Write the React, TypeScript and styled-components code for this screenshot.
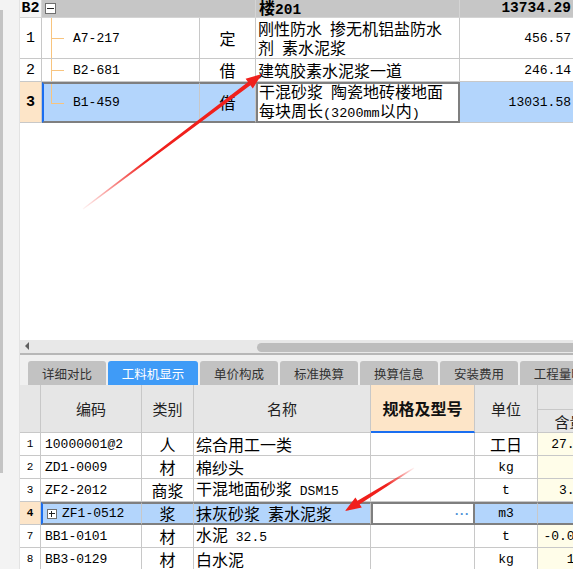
import React from "react";
import styled, { createGlobalStyle, css } from "styled-components";

const CJK = `"Noto Sans CJK SC", "Liberation Sans", sans-serif`;
const MONO = `"Liberation Mono", "Noto Sans CJK SC", monospace`;

const GlobalStyle = createGlobalStyle`
  html, body {
    margin: 0;
    padding: 0;
    background: #fff;
  }
  body {
    font-family: ${CJK};
    color: #000;
    overflow: hidden;
  }
  * {
    box-sizing: border-box;
  }
`;

const Page = styled.div`
  position: relative;
  width: 573px;
  height: 569px;
  overflow: hidden;
  display: flex;
  background: #fff;
`;

const Side = styled.aside`
  flex: 0 0 20px;
  background: #f3f3f3;
  border-right: 1px solid #e3e3e3;
  padding-top: 10px;
`;

const Rail = styled.div`
  width: 3px;
  height: 463px;
  background: #c4c4c4;
`;

const Main = styled.main`
  flex: 1;
  min-width: 0;
  display: flex;
  flex-direction: column;
`;

/* ---------- shared cells ---------- */

const Row = styled.div<{ $cols: string; $h: number }>`
  display: grid;
  grid-template-columns: ${(p) => p.$cols};
  height: ${(p) => p.$h}px;
  flex: 0 0 auto;
`;

type Align = "left" | "center" | "right";

const Cell = styled.div<{
  $bg?: string;
  $align?: Align;
  $sel?: boolean;
  $edit?: boolean;
  $mark?: boolean;
  $pl?: number;
  $line?: string;
}>`
  display: flex;
  align-items: center;
  justify-content: ${(p) =>
    p.$align === "center" ? "center" : p.$align === "right" ? "flex-end" : "flex-start"};
  padding: 0 3px;
  ${(p) => p.$pl !== undefined && css`padding-left: ${p.$pl}px;`}
  background: ${(p) => p.$bg ?? "#fff"};
  border-right: 1px solid ${(p) => p.$line ?? "#c8c8c8"};
  border-bottom: 1px solid ${(p) => p.$line ?? "#c8c8c8"};
  overflow: hidden;
  white-space: nowrap;
  font-family: ${CJK};
  font-size: 16px;
  line-height: 19px;
  ${(p) =>
    p.$sel &&
    css`
      border-top: 2px solid #7f7f7f;
      border-bottom: 2px solid #7f7f7f;
    `}
  ${(p) =>
    p.$edit &&
    css`
      border: 2px solid #7f7f7f;
    `}
  ${(p) =>
    p.$mark &&
    css`
      border-left: 2px solid #1a6ef0;
    `}
`;

const Text = styled.span<{ $bold?: boolean }>`
  white-space: pre;
  font-weight: ${(p) => (p.$bold ? 700 : 400)};
`;

const Mono = styled.span<{ $size?: number; $bold?: boolean }>`
  font-family: ${MONO};
  font-size: ${(p) => p.$size ?? 13}px;
  font-weight: ${(p) => (p.$bold ? 700 : 400)};
`;

const Lines = styled.div`
  white-space: pre;
  line-height: 19px;
`;

const Toggle = styled.span<{ $plus?: boolean; $size?: number }>`
  position: relative;
  flex: 0 0 auto;
  width: ${(p) => p.$size ?? 11}px;
  height: ${(p) => p.$size ?? 11}px;
  margin-right: ${(p) => (p.$plus ? 5 : 0)}px;
  border: 1px solid #6f6f6f;
  background: #fff;
  &::before {
    content: "";
    position: absolute;
    left: 1px;
    right: 1px;
    top: calc(50% - 1px);
    border-top: 1px solid #222;
  }
  ${(p) =>
    p.$plus &&
    css`
      &::after {
        content: "";
        position: absolute;
        top: 1px;
        bottom: 1px;
        left: calc(50% - 1px);
        border-left: 1px solid #222;
      }
    `}
`;

/* ---------- top grid ---------- */

const TOP_COLS = "22px 158px 56px 204px 115px";
const SEL_BG = "#b3d5fc";
const PEACH = "#fde5c8";

const Branch = styled.span<{ $last?: boolean }>`
  position: relative;
  align-self: stretch;
  flex: 0 0 13px;
  margin-right: 9px;
  &::before {
    content: "";
    position: absolute;
    left: 0;
    top: 0;
    bottom: ${(p) => (p.$last ? "50%" : "0")};
    border-left: 1px solid #f8c47e;
  }
  &::after {
    content: "";
    position: absolute;
    left: 0;
    right: 0;
    top: 50%;
    border-top: 1px solid #f8c47e;
  }
`;

const HeadCell = styled(Cell)`
  grid-column: span 2;
`;

const Blank = styled.div`
  height: 217px;
  flex: 0 0 auto;
  background: #fff;
`;

/* ---------- scrollbar + tabs ---------- */

const HScroll = styled.div`
  flex: 0 0 auto;
  height: 15px;
  display: flex;
  align-items: center;
  padding: 0 0 2px 5px;
  background: #e8e8e8;
  border-bottom: 2px solid #b7b7b7;
`;

const LeftArrow = styled.span`
  width: 0;
  height: 0;
  border-top: 4px solid transparent;
  border-bottom: 4px solid transparent;
  border-right: 4px solid #606060;
`;

const Thumb = styled.span`
  margin-left: auto;
  flex: 0 0 316px;
  height: 9px;
  margin-top: 3px;
  border-radius: 5px 0 0 5px;
  background: #bdbdbd;
`;

const TabBar = styled.nav`
  flex: 0 0 auto;
  height: 30px;
  display: flex;
  align-items: flex-end;
  gap: 2px;
  padding-left: 8px;
  background: #f0f0f0;
  overflow: hidden;
`;

const Tab = styled.div<{ $active?: boolean; $w: number }>`
  flex: 0 0 ${(p) => p.$w}px;
  height: 24px;
  display: flex;
  align-items: center;
  justify-content: center;
  border-radius: 3px 3px 0 0;
  background: ${(p) => (p.$active ? "#3f9bf7" : "#c2c2c2")};
  color: ${(p) => (p.$active ? "#fff" : "#333")};
  font-family: ${CJK};
  font-size: 12.5px;
  white-space: nowrap;
`;

/* ---------- bottom grid ---------- */

const BOT_COLS = "21px 101px 52px 177px 104px 63px 64px";
const HEAD_BG = "#e6e6e6";
const QTY_BG = "#fffde9";

const HCell = styled(Cell)`
  font-size: 15px;
  color: #222;
`;

const SpecHead = styled(HCell)`
  background: ${PEACH};
  font-weight: 700;
  font-size: 16px;
  border-bottom: 2px solid #1a6ef0;
  color: #111;
`;

const SplitHead = styled.div`
  display: flex;
  flex-direction: column;
  background: ${HEAD_BG};
  border-right: 1px solid #c8c8c8;
  border-bottom: 1px solid #c8c8c8;
`;

const SplitTop = styled.div`
  height: 25px;
  border-bottom: 1px solid #c8c8c8;
`;

const SplitBottom = styled.div`
  flex: 1;
  display: flex;
  align-items: center;
  justify-content: center;
  font-size: 15px;
  color: #222;
`;

const Dots = styled.span`
  margin-left: auto;
  font-family: "Liberation Sans", sans-serif;
  font-size: 12px;
  font-weight: 700;
  letter-spacing: 1px;
  color: #4a8fd6;
  line-height: 1;
`;

const Overlay = styled.svg`
  position: absolute;
  left: 0;
  top: 0;
  pointer-events: none;
`;

type Item = {
  n: string;
  code: string;
  type: string;
  name: React.ReactNode;
  unit: string;
  qty: string;
  sel?: boolean;
};

const items: Item[] = [
  { n: "1", code: "10000001@2", type: "人", name: "综合用工一类", unit: "工日", qty: "27.035" },
  { n: "2", code: "ZD1-0009", type: "材", name: "棉纱头", unit: "kg", qty: "0.1" },
  {
    n: "3",
    code: "ZF2-2012",
    type: "商浆",
    name: (
      <>
        干混地面砂浆<Mono> DSM15</Mono>
      </>
    ),
    unit: "t",
    qty: "3.479",
  },
  { n: "4", code: "ZF1-0512", type: "浆", name: "抹灰砂浆\u2002素水泥浆", unit: "m3", qty: "0.1", sel: true },
  {
    n: "7",
    code: "BB1-0101",
    type: "材",
    name: (
      <>
        水泥<Mono> 32.5</Mono>
      </>
    ),
    unit: "t",
    qty: "-0.0101",
  },
  { n: "8", code: "BB3-0129", type: "材", name: "白水泥", unit: "kg", qty: "1.55" },
];

const tabs = ["详细对比", "工料机显示", "单价构成", "标准换算", "换算信息", "安装费用", "工程量明细"];

function Arrows() {
  return (
    <Overlay width={573} height={569} viewBox="0 0 573 569">
      <defs>
        <linearGradient id="fadeA" gradientUnits="userSpaceOnUse" x1="83" y1="209" x2="262" y2="74">
          <stop offset="0" stopColor="#f0201c" stopOpacity="0.05" />
          <stop offset="0.35" stopColor="#f0201c" stopOpacity="1" />
          <stop offset="1" stopColor="#f0201c" stopOpacity="1" />
        </linearGradient>
        <linearGradient id="fadeB" gradientUnits="userSpaceOnUse" x1="414" y1="468" x2="345" y2="511">
          <stop offset="0" stopColor="#f0201c" stopOpacity="0.05" />
          <stop offset="0.4" stopColor="#f0201c" stopOpacity="1" />
          <stop offset="1" stopColor="#f0201c" stopOpacity="1" />
        </linearGradient>
      </defs>
      <polygon
        fill="url(#fadeA)"
        points="83.3,209.4 250.4,85.2 252.8,88.4 262,74 245.6,78.8 248,82 82.7,208.6"
      />
      <polygon
        fill="url(#fadeB)"
        points="414.3,468.4 359.7,504.2 361.8,507.6 345,511 355.4,497.4 357.5,500.8 413.7,467.6"
      />
    </Overlay>
  );
}

export default function App() {
  return (
    <Page>
      <GlobalStyle />
      <Side>
        <Rail />
      </Side>
      <Main>
        {/* top grid */}
        <Row $cols={TOP_COLS} $h={18}>
          <Cell $bg="#f5f5f5" $align="center" $line="#d4d4d4">
            <Mono $size={15} $bold>
              B2
            </Mono>
          </Cell>
          <HeadCell $bg="#c6c6c6" $pl={3} $line="#d4d4d4">
            <Toggle />
          </HeadCell>
          <Cell $bg="#c6c6c6" $line="#d4d4d4">
            <Text $bold>
              楼<Mono $size={14.5} $bold>201</Mono>
            </Text>
          </Cell>
          <Cell $bg="#c6c6c6" $align="right" $line="#d4d4d4">
            <Mono $size={14.5} $bold>
              13734.29
            </Mono>
          </Cell>
        </Row>

        <Row $cols={TOP_COLS} $h={41}>
          <Cell $align="center">
            <Mono $size={15}>1</Mono>
          </Cell>
          <Cell $pl={9}>
            <Branch />
            <Mono>A7-217</Mono>
          </Cell>
          <Cell $align="center">定</Cell>
          <Cell $pl={2}>
            <Lines>
              刚性防水{"\u2002"}掺无机铝盐防水
              <br />
              剂{"\u2002"}素水泥浆
            </Lines>
          </Cell>
          <Cell $align="right">
            <Mono>456.57</Mono>
          </Cell>
        </Row>

        <Row $cols={TOP_COLS} $h={23}>
          <Cell $align="center">
            <Mono $size={15}>2</Mono>
          </Cell>
          <Cell $pl={9}>
            <Branch />
            <Mono>B2-681</Mono>
          </Cell>
          <Cell $align="center">借</Cell>
          <Cell $pl={2}>建筑胶素水泥浆一道</Cell>
          <Cell $align="right">
            <Mono>246.14</Mono>
          </Cell>
        </Row>

        <Row $cols={TOP_COLS} $h={41}>
          <Cell $align="center" $bg={PEACH}>
            <Mono $size={15} $bold>
              3
            </Mono>
          </Cell>
          <Cell $pl={7} $bg={SEL_BG} $sel $mark>
            <Branch $last />
            <Mono>B1-459</Mono>
          </Cell>
          <Cell $align="center" $bg={SEL_BG} $sel>
            借
          </Cell>
          <Cell $pl={1} $edit>
            <Lines>
              干混砂浆{"\u2002"}陶瓷地砖楼地面
              <br />
              每块周长<Mono $size={13.5}>(3200mm</Mono>以内<Mono $size={13.5}>)</Mono>
            </Lines>
          </Cell>
          <Cell $align="right" $bg={SEL_BG}>
            <Mono>13031.58</Mono>
          </Cell>
        </Row>

        <Blank />

        <HScroll>
          <LeftArrow />
          <Thumb />
        </HScroll>

        <TabBar>
          {tabs.map((t, i) => (
            <Tab key={t} $active={i === 1} $w={i === 1 ? 90 : i === tabs.length - 1 ? 90 : 78}>
              {t}
            </Tab>
          ))}
        </TabBar>

        {/* bottom grid */}
        <Row $cols={BOT_COLS} $h={48}>
          <HCell $bg={HEAD_BG} />
          <HCell $bg={HEAD_BG} $align="center">
            编码
          </HCell>
          <HCell $bg={HEAD_BG} $align="center">
            类别
          </HCell>
          <HCell $bg={HEAD_BG} $align="center">
            名称
          </HCell>
          <SpecHead $align="center">规格及型号</SpecHead>
          <HCell $bg={HEAD_BG} $align="center">
            单位
          </HCell>
          <SplitHead>
            <SplitTop />
            <SplitBottom>含量</SplitBottom>
          </SplitHead>
        </Row>

        {items.map((it) => {
          const bg = it.sel ? SEL_BG : "#fff";
          return (
            <Row key={it.n} $cols={BOT_COLS} $h={23}>
              <Cell $align="center" $bg={it.sel ? PEACH : "#fff"}>
                <Mono $size={11} $bold={it.sel}>
                  {it.n}
                </Mono>
              </Cell>
              <Cell $pl={4} $bg={bg} $sel={it.sel} $mark={it.sel}>
                {it.sel && <Toggle $plus $size={10} />}
                <Mono>{it.code}</Mono>
              </Cell>
              <Cell $align="center" $bg={bg} $sel={it.sel}>
                <Text>{it.type}</Text>
              </Cell>
              <Cell $pl={2} $bg={bg} $sel={it.sel}>
                <Text>{it.name}</Text>
              </Cell>
              {it.sel ? (
                <Cell $edit $pl={4}>
                  <Dots>···</Dots>
                </Cell>
              ) : (
                <Cell />
              )}
              <Cell $align="center" $bg={bg} $sel={it.sel}>
                {/^[a-z0-9]+$/i.test(it.unit) ? <Mono>{it.unit}</Mono> : <Text>{it.unit}</Text>}
              </Cell>
              <Cell $align="right" $bg={it.sel ? SEL_BG : QTY_BG} $sel={it.sel}>
                <Mono>{it.qty}</Mono>
              </Cell>
            </Row>
          );
        })}
      </Main>
      <Arrows />
    </Page>
  );
}
